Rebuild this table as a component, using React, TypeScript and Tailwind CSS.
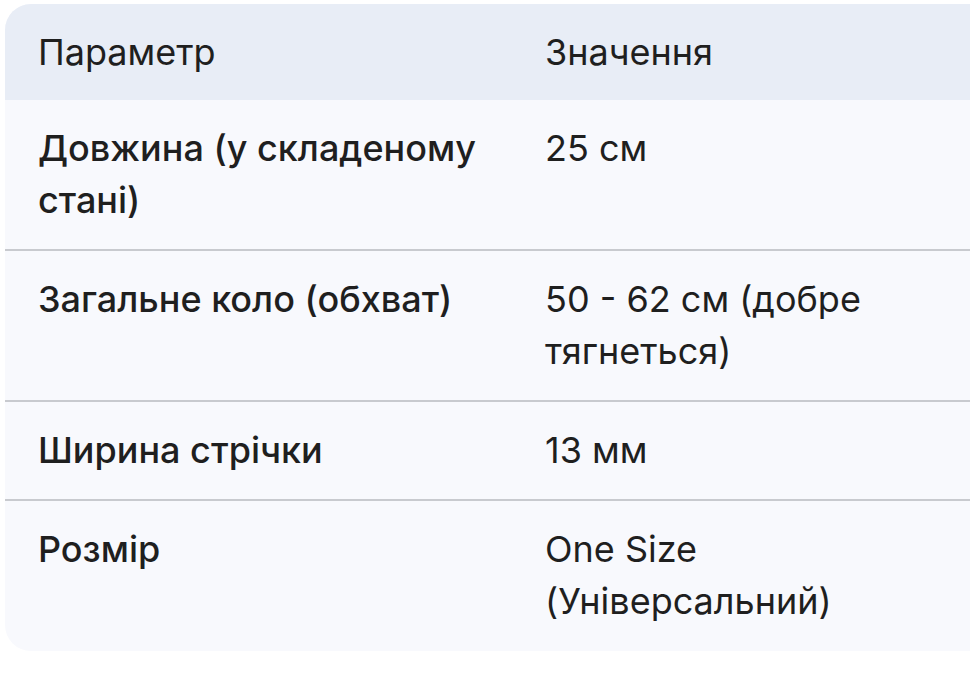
import React from "react";

const rows: [string, string][] = [
  ["Довжина (у складеному стані)", "25 см"],
  ["Загальне коло (обхват)", "50 - 62 см (добре тягнеться)"],
  ["Ширина стрічки", "13 мм"],
  ["Розмір", "One Size (Універсальний)"],
];

export default function App() {
  return (
    <div className="w-[970px] h-[687px] overflow-hidden bg-white font-['Inter',sans-serif] text-[#1f1f1f]">
      <div className="ml-[5px] mt-[4px] w-[1000px] rounded-[26px] overflow-hidden bg-[#f8f9fd]">
        <table className="w-full border-collapse text-[36px] leading-[52px]">
          <thead>
            <tr className="bg-[#e8edf6]">
              <th className="w-[507px] pl-[33px] pr-6 py-[22px] text-left font-normal align-top">
                Параметр
              </th>
              <th className="pl-[33px] pr-6 py-[22px] text-left font-normal align-top">
                Значення
              </th>
            </tr>
          </thead>
          <tbody>
            {rows.map(([name, value], i) => {
              const last = i === rows.length - 1;
              const pad = last ? "pt-[22px] pb-[24px]" : "pt-[22px] pb-[23px]";
              return (
                <tr key={name} className={last ? "" : "border-b-2 border-[#c8cacf]"}>
                  <td className={`pl-[33px] pr-6 align-top font-medium ${pad}`}>
                    <div className="w-[445px]">{name}</div>
                  </td>
                  <td className={`pl-[33px] pr-6 align-top ${pad}`}>
                    <div className="w-[330px]">{value}</div>
                  </td>
                </tr>
              );
            })}
          </tbody>
        </table>
      </div>
    </div>
  );
}
